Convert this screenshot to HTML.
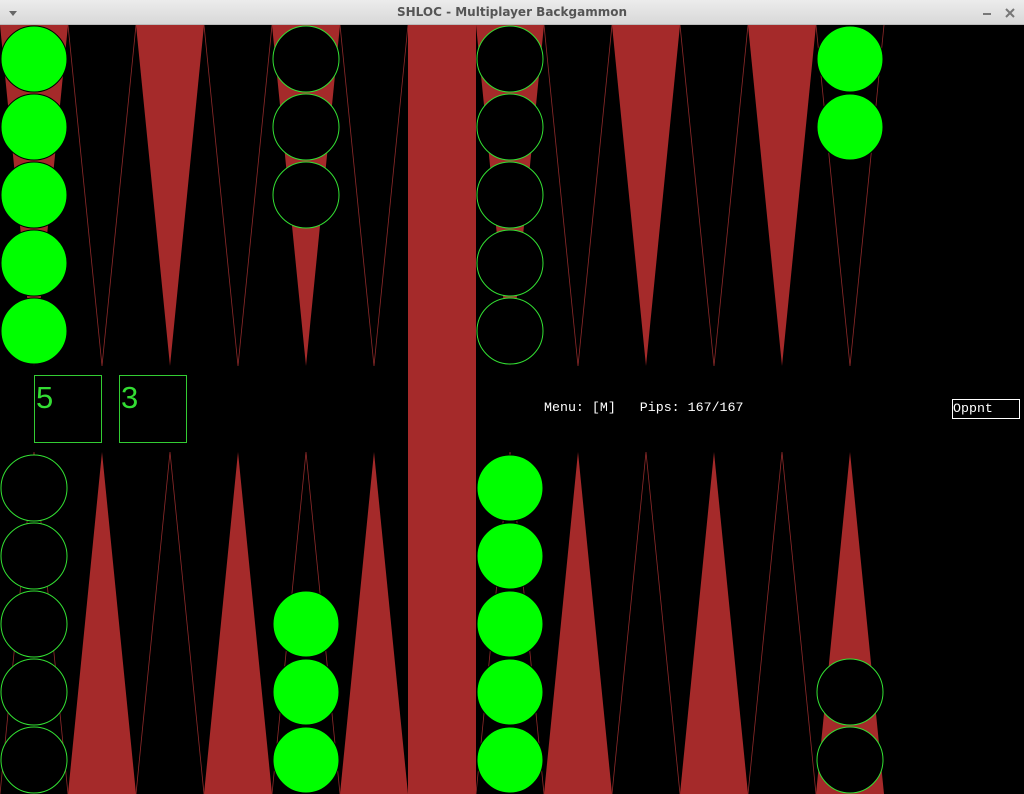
<!DOCTYPE html>
<html><head><meta charset="utf-8"><style>
html,body{margin:0;padding:0;background:#000;width:1024px;height:794px;overflow:hidden}
.tb{position:absolute;left:0;top:0;width:1024px;height:25px;background:linear-gradient(#ececec,#d8d8d8);border-bottom:1px solid #bbb;box-sizing:border-box}
.tt{position:absolute;left:0;right:0;top:5px;text-align:center;font:bold 12px "DejaVu Sans","Liberation Sans",sans-serif;color:#555}
</style></head><body>
<div class="tb"><div class="tt">SHLOC - Multiplayer Backgammon</div>
<svg width="1024" height="25" style="position:absolute;left:0;top:0">
<polygon points="9,11 17,11 13,16" fill="#666"/>
<rect x="983" y="13" width="8" height="2" fill="#777"/>
<path d="M1006,9 L1014,17 M1014,9 L1006,17" stroke="#777" stroke-width="2"/>
</svg></div>
<svg width="1024" height="769" style="position:absolute;left:0;top:25px" viewBox="0 25 1024 769">
<g fill="#a52a2a">
<polygon points="0,25 68,25 34,366"/><polygon points="136,25 204,25 170,366"/><polygon points="272,25 340,25 306,366"/>
<polygon points="476,25 544,25 510,366"/><polygon points="612,25 680,25 646,366"/><polygon points="748,25 816,25 782,366"/>
<polygon points="68,794 136,794 102,452"/><polygon points="204,794 272,794 238,452"/><polygon points="340,794 408,794 374,452"/>
<polygon points="544,794 612,794 578,452"/><polygon points="680,794 748,794 714,452"/><polygon points="816,794 884,794 850,452"/>
<rect x="408" y="25" width="68" height="769"/>
</g>
<g fill="none" stroke="#8f2a2a" stroke-width="0.8">
<polyline points="68,25 102,366 136,25"/><polyline points="204,25 238,366 272,25"/><polyline points="340,25 374,366 408,25"/>
<polyline points="544,25 578,366 612,25"/><polyline points="680,25 714,366 748,25"/><polyline points="816,25 850,366 884,25"/>
<polyline points="0,794 34,452 68,794"/><polyline points="136,794 170,452 204,794"/><polyline points="272,794 306,452 340,794"/>
<polyline points="476,794 510,452 544,794"/><polyline points="612,794 646,452 680,794"/><polyline points="748,794 782,452 816,794"/>
</g>
<g fill="#00ff00" stroke="#000" stroke-width="1">
<circle cx="34" cy="59" r="33"/><circle cx="34" cy="127" r="33"/><circle cx="34" cy="195" r="33"/><circle cx="34" cy="263" r="33"/><circle cx="34" cy="331" r="33"/>
<circle cx="850" cy="59" r="33"/><circle cx="850" cy="127" r="33"/>
<circle cx="306" cy="760" r="33"/><circle cx="306" cy="692" r="33"/><circle cx="306" cy="624" r="33"/>
<circle cx="510" cy="760" r="33"/><circle cx="510" cy="692" r="33"/><circle cx="510" cy="624" r="33"/><circle cx="510" cy="556" r="33"/><circle cx="510" cy="488" r="33"/>
</g>
<g fill="#000" stroke="#33e033" stroke-width="1">
<circle cx="306" cy="59" r="33"/><circle cx="306" cy="127" r="33"/><circle cx="306" cy="195" r="33"/>
<circle cx="510" cy="59" r="33"/><circle cx="510" cy="127" r="33"/><circle cx="510" cy="195" r="33"/><circle cx="510" cy="263" r="33"/><circle cx="510" cy="331" r="33"/>
<circle cx="34" cy="760" r="33"/><circle cx="34" cy="692" r="33"/><circle cx="34" cy="624" r="33"/><circle cx="34" cy="556" r="33"/><circle cx="34" cy="488" r="33"/>
<circle cx="850" cy="760" r="33"/><circle cx="850" cy="692" r="33"/>
</g>
<g fill="none" stroke="#33cc33" stroke-width="1">
<rect x="34.5" y="375.5" width="67" height="67"/><rect x="119.5" y="375.5" width="67" height="67"/>
</g>
<g fill="#33dd33" font-family="Liberation Sans,sans-serif" font-size="31">
<text x="36" y="408">5</text><text x="121" y="408">3</text>
</g>
<text x="544" y="411" fill="#fff" font-family="Liberation Mono,monospace" font-size="13.3" style="white-space:pre" xml:space="preserve">Menu: [M]   Pips: 167/167</text>
<rect x="952.5" y="399.5" width="67" height="19" fill="none" stroke="#fff"/>
<text x="953" y="412" fill="#fff" font-family="Liberation Mono,monospace" font-size="13.3">Oppnt</text>
</svg>
</body></html>
